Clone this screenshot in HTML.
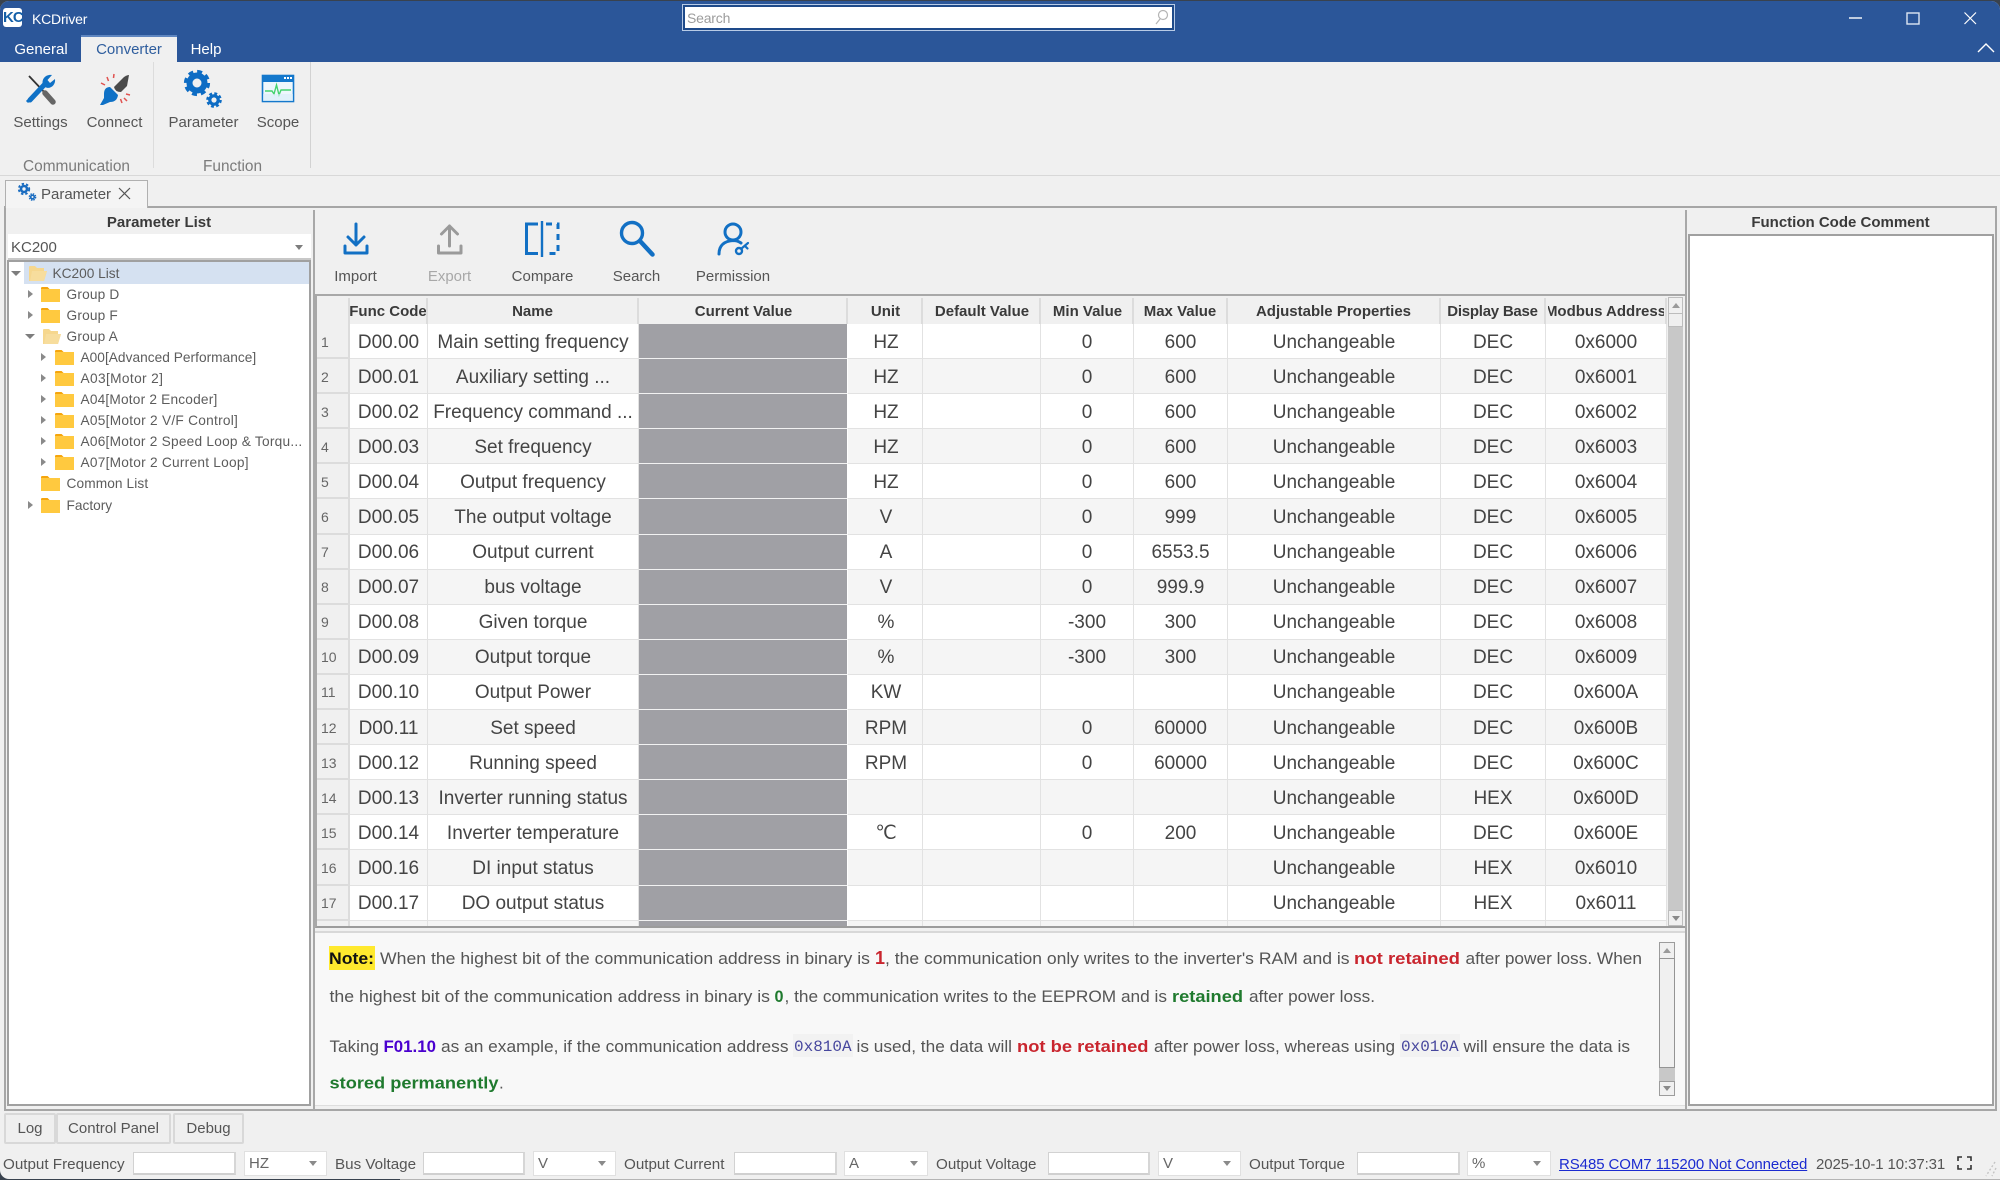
<!DOCTYPE html>
<html lang="en"><head><meta charset="utf-8"><title>KCDriver</title>
<style>
*{box-sizing:border-box}
html,body{margin:0;padding:0;width:2000px;height:1180px;overflow:hidden;background:#39424e}
body{font-family:"Liberation Sans",sans-serif;color:#555;position:relative}
#app{position:absolute;left:0;top:1px;width:2000px;height:1178px;background:#f0f0f0;border-radius:9px 9px 0 9px;overflow:hidden}
.a{position:absolute;white-space:nowrap}
.c{position:absolute;white-space:nowrap;text-align:center;transform:translateX(-50%)}
.v{position:absolute;left:0;top:-1px;pointer-events:none}
#title{position:absolute;left:0;top:-1px;width:2000px;height:62px;background:#2b5699}
.rib{font-size:15px;line-height:20px;color:#555}
.grp{font-size:15.4px;line-height:20px;color:#7b7b7b}
.tb{font-size:15px;line-height:20px;color:#555}
.hd{font-size:15px;font-weight:bold;color:#3a3a3a;line-height:20px}
/* tree */
.tr{position:absolute;font-size:13.7px;line-height:20px;color:#5c5c5c;white-space:nowrap}
.ar{position:absolute;width:0;height:0;border-top:4.5px solid transparent;border-bottom:4.5px solid transparent;border-left:5px solid #8a8a8a}
.dn{position:absolute;width:0;height:0;border-left:5px solid transparent;border-right:5px solid transparent;border-top:5px solid #7d7d7d}
/* grid */
#grid{position:absolute;left:315px;top:293px;width:1370px;height:634px;overflow:hidden;background:#f0f0f0;border-top:2px solid #a8a8a8;border-bottom:2px solid #9c9c9c;border-left:2px solid #a8a8a8}
#gh{position:absolute;left:0;top:2px;height:26px;display:flex}
#gh span{display:flex;align-items:center;justify-content:center;height:26px;font-size:15px;font-weight:bold;color:#3a3a3a;border-right:2px solid #dcdcdc;white-space:nowrap;overflow:hidden;background:#f0f0f0}
#gh span:nth-child(4),#gh span:nth-child(5),#gh span:nth-child(6),#gh span:nth-child(7){padding-left:2px}
#gh span:nth-child(10){letter-spacing:-.25px}
#gh em{display:flex;justify-content:center;width:116px;overflow:hidden;font-style:normal}
#gh em b{flex:none}
.wrap{position:absolute;left:0;top:28px;width:1351px}
.r{display:flex;height:35.1px}
.r span{display:flex;align-items:center;justify-content:center;font-size:19px;color:#444;background:#fff;border-right:1px solid #e2e2e2;border-bottom:1px solid #e2e2e2;white-space:nowrap;overflow:hidden;padding-top:3px}
.r:nth-child(even) span{background:#f5f5f5}
.r span:nth-child(5){padding-left:2px}
.r span:nth-child(1),.r:nth-child(even) span:nth-child(1){background:#f0f0f0;font-size:14px;color:#666;justify-content:flex-start;padding-left:4px;border:0;border-right:2px solid #dcdcdc;border-bottom:2px solid #dcdcdc;padding-top:2px}
.r span:nth-child(4),.r:nth-child(even) span:nth-child(4){background:#a0a0a5;border-bottom:1.5px solid #f2f2f2;border-right:1px solid #fff}
.r span:nth-child(1),#gh span:nth-child(1){width:33px}
.r span:nth-child(2),#gh span:nth-child(2){width:78px}
.r span:nth-child(3),#gh span:nth-child(3){width:211px}
.r span:nth-child(4),#gh span:nth-child(4){width:209px}
.r span:nth-child(5),#gh span:nth-child(5){width:75px}
.r span:nth-child(6),#gh span:nth-child(6){width:118px}
.r span:nth-child(7),#gh span:nth-child(7){width:93px}
.r span:nth-child(8),#gh span:nth-child(8){width:94px}
.r span:nth-child(9),#gh span:nth-child(9){width:213px}
.r span:nth-child(10),#gh span:nth-child(10){width:105px}
.r span:nth-child(11),#gh span:nth-child(11){width:121px}
.arrU{position:absolute;width:0;height:0;border-left:4px solid transparent;border-right:4px solid transparent;border-bottom:5px solid #9a9a9a}
.arrD{position:absolute;width:0;height:0;border-left:4px solid transparent;border-right:4px solid transparent;border-top:5px solid #8a8a8a}
.sbb{position:absolute;background:#f0f0f0;border:1px solid #bdbdbd}
/* status */
.lb{position:absolute;top:1154px;font-size:15.2px;line-height:20px;color:#555;white-space:nowrap}
.inp{position:absolute;top:1151px;height:23px;background:#fff;border:1px solid #d2d2d2;border-bottom:2px solid #d0d0d0;border-right:2px solid #d6d6d6}
.cmb{position:absolute;top:1150px;height:25px;background:#fff;border:1px solid #e0e0e0;font-size:15px;line-height:24px;padding-left:4px;color:#666}
.cmb i{position:absolute;right:9px;top:9px;width:0;height:0;border-left:4px solid transparent;border-right:4px solid transparent;border-top:5px solid #8a8a8a}
.btab{position:absolute;top:1112px;height:31px;background:#efefef;border:2px solid #d8d8d8;border-radius:2px;font-size:15px;line-height:28px;text-align:center;color:#555}
</style></head>
<body>
<svg width="0" height="0" style="position:absolute">
<defs>
<symbol id="fo" viewBox="0 0 19 15"><path d="M0 1.5Q0 0 1.5 0H6.5L8.5 2H19V15H0Z" fill="#ffc93f"/><path d="M0 1.5Q0 0 1.5 0H6.5L8.5 2H0Z" fill="#f5a50e"/></symbol>
<symbol id="fo2" viewBox="0 0 19 15"><path d="M1 1Q1 0 2 0H7L9 2H16V5H19L16 15H1Z" fill="#f6d78e"/><path d="M2 15L4 5H19L16 15Z" fill="#f7dd9d"/></symbol>
</defs>
</svg>
<div id="app">
<div id="title"></div>
<!-- logo -->
<div class="a" style="left:3px;top:7px;width:19px;height:19px;background:#fff;border-radius:3px;color:#1560a8;font-weight:bold;font-size:15px;line-height:19px;text-align:center;letter-spacing:-1px">KC</div>
<div class="a" style="left:32px;top:8px;font-size:14px;line-height:20px;color:#fff;width:54px;letter-spacing:-.2px">KCDriver</div>
<!-- search -->
<div class="a" style="left:683px;top:4px;width:491px;height:25px;background:#fff;border:2px solid #1e4a8a;outline:1px solid #b8cbe6"></div>
<div class="a" style="left:687px;top:8px;font-size:14px;line-height:18px;color:#9c9c9c;letter-spacing:-.2px">Search</div>
<!-- tabs -->
<div class="a" style="left:81px;top:34px;width:96px;height:28px;background:#f0f0f0;border-top:2px solid #5f86c0"></div>
<div class="c" style="left:41px;top:39px;font-size:15px;line-height:20px;color:#fff">General</div>
<div class="c" style="left:129px;top:39px;font-size:15px;line-height:20px;color:#2f5e9e">Converter</div>
<div class="c" style="left:206px;top:39px;font-size:15px;line-height:20px;color:#fff">Help</div>
<!-- ribbon -->
<div class="a" style="left:153px;top:61px;width:1px;height:106px;background:#dcdcdc"></div>
<div class="a" style="left:310px;top:61px;width:1px;height:106px;background:#d2d2d2"></div>
<div class="a" style="left:0;top:174px;width:2000px;height:1px;background:#d8d8d8"></div>
<div class="c rib" style="left:40.5px;top:112px">Settings</div>
<div class="c rib" style="left:114.5px;top:112px">Connect</div>
<div class="c rib" style="left:203.5px;top:112px">Parameter</div>
<div class="c rib" style="left:278px;top:112px">Scope</div>
<div class="c grp" style="left:76.5px;top:156px">Communication</div>
<div class="c grp" style="left:232.5px;top:156px">Function</div>
<!-- doc tab -->
<div class="a" style="left:4px;top:205px;width:1993px;height:905px;border:2px solid #a6a6a6"></div>
<div class="a" style="left:5px;top:179px;width:143px;height:28px;background:#f4f4f4;border:1px solid #b0b0b0;border-bottom:0"></div>
<div class="a" style="left:41px;top:183.5px;font-size:15px;line-height:20px;color:#555">Parameter</div>
<!-- left panel -->
<div class="c hd" style="left:159px;top:212px">Parameter List</div>
<div class="a" style="left:8px;top:233px;width:303px;height:26px;background:#fff;border-bottom:2px solid #c8c8c8;font-size:15px;line-height:27px;padding-left:3px;color:#555">KC200</div>
<div class="dn" style="left:295px;top:244px;border-left-width:4px;border-right-width:4px"></div>
<div class="a" style="left:7px;top:259px;width:304px;height:846px;background:#fff;border:2px solid #a0a0a0"></div>
<div class="a" style="left:24px;top:261px;width:285px;height:22px;background:#d5e1f1"></div>
<div class="dn" style="left:11px;top:270px"></div>
<svg class="a" style="left:28px;top:265px" width="19" height="15"><use href="#fo2"/></svg>
<div class="tr" style="left:52.5px;top:262.5px">KC200 List</div>
<div class="ar" style="left:28px;top:289px"></div><svg class="a" style="left:41px;top:286px" width="19" height="15"><use href="#fo"/></svg><div class="tr" style="left:66.5px;top:283.5px;letter-spacing:.18px">Group D</div>
<div class="ar" style="left:28px;top:310px"></div><svg class="a" style="left:41px;top:307px" width="19" height="15"><use href="#fo"/></svg><div class="tr" style="left:66.5px;top:304.5px;letter-spacing:.18px">Group F</div>
<div class="dn" style="left:25px;top:333px"></div><svg class="a" style="left:42px;top:328px" width="19" height="15"><use href="#fo2"/></svg><div class="tr" style="left:66.5px;top:326px;letter-spacing:.18px">Group A</div>
<div class="ar" style="left:41px;top:352px"></div><svg class="a" style="left:55px;top:349px" width="19" height="15"><use href="#fo"/></svg><div class="tr" style="left:80.5px;top:346.5px;letter-spacing:.03px">A00[Advanced Performance]</div>
<div class="ar" style="left:41px;top:373px"></div><svg class="a" style="left:55px;top:370px" width="19" height="15"><use href="#fo"/></svg><div class="tr" style="left:80.5px;top:368px;letter-spacing:.37px">A03[Motor 2]</div>
<div class="ar" style="left:41px;top:394px"></div><svg class="a" style="left:55px;top:391px" width="19" height="15"><use href="#fo"/></svg><div class="tr" style="left:80.5px;top:389px;letter-spacing:.19px">A04[Motor 2 Encoder]</div>
<div class="ar" style="left:41px;top:415px"></div><svg class="a" style="left:55px;top:412px" width="19" height="15"><use href="#fo"/></svg><div class="tr" style="left:80.5px;top:410px;letter-spacing:.26px">A05[Motor 2 V/F Control]</div>
<div class="ar" style="left:41px;top:436px"></div><svg class="a" style="left:55px;top:433px" width="19" height="15"><use href="#fo"/></svg><div class="tr" style="left:80.5px;top:431px;letter-spacing:.23px">A06[Motor 2 Speed Loop &amp; Torqu...</div>
<div class="ar" style="left:41px;top:457px"></div><svg class="a" style="left:55px;top:454px" width="19" height="15"><use href="#fo"/></svg><div class="tr" style="left:80.5px;top:452px;letter-spacing:.25px">A07[Motor 2 Current Loop]</div>
<svg class="a" style="left:41px;top:475px" width="19" height="15"><use href="#fo"/></svg><div class="tr" style="left:66.5px;top:473px;letter-spacing:.1px">Common List</div>
<div class="ar" style="left:28px;top:500px"></div><svg class="a" style="left:41px;top:497px" width="19" height="15"><use href="#fo"/></svg><div class="tr" style="left:66.5px;top:494.5px">Factory</div>
<!-- divider -->
<div class="a" style="left:313px;top:209px;width:2px;height:900px;background:#a8a8a8"></div>
<div class="a" style="left:1685px;top:209px;width:2px;height:900px;background:#a8a8a8"></div>
<!-- toolbar labels -->
<div class="c tb" style="left:355.5px;top:266px">Import</div>
<div class="c tb" style="left:449.5px;top:266px;color:#a8a8a8">Export</div>
<div class="c tb" style="left:542.5px;top:266px">Compare</div>
<div class="c tb" style="left:636.5px;top:266px">Search</div>
<div class="c tb" style="left:733px;top:266px">Permission</div>
<!-- grid -->
<div id="grid">
<div id="gh"><span></span><span>Func Code</span><span>Name</span><span>Current Value</span><span>Unit</span><span>Default Value</span><span>Min Value</span><span>Max Value</span><span>Adjustable Properties</span><span>Display Base</span><span><em><b>Modbus Address</b></em></span></div>
<div class="wrap">
<div class="r"><span>1</span><span>D00.00</span><span>Main setting frequency</span><span></span><span>HZ</span><span></span><span>0</span><span>600</span><span>Unchangeable</span><span>DEC</span><span>0x6000</span></div>
<div class="r"><span>2</span><span>D00.01</span><span>Auxiliary setting ...</span><span></span><span>HZ</span><span></span><span>0</span><span>600</span><span>Unchangeable</span><span>DEC</span><span>0x6001</span></div>
<div class="r"><span>3</span><span>D00.02</span><span>Frequency command ...</span><span></span><span>HZ</span><span></span><span>0</span><span>600</span><span>Unchangeable</span><span>DEC</span><span>0x6002</span></div>
<div class="r"><span>4</span><span>D00.03</span><span>Set frequency</span><span></span><span>HZ</span><span></span><span>0</span><span>600</span><span>Unchangeable</span><span>DEC</span><span>0x6003</span></div>
<div class="r"><span>5</span><span>D00.04</span><span>Output frequency</span><span></span><span>HZ</span><span></span><span>0</span><span>600</span><span>Unchangeable</span><span>DEC</span><span>0x6004</span></div>
<div class="r"><span>6</span><span>D00.05</span><span>The output voltage</span><span></span><span>V</span><span></span><span>0</span><span>999</span><span>Unchangeable</span><span>DEC</span><span>0x6005</span></div>
<div class="r"><span>7</span><span>D00.06</span><span>Output current</span><span></span><span>A</span><span></span><span>0</span><span>6553.5</span><span>Unchangeable</span><span>DEC</span><span>0x6006</span></div>
<div class="r"><span>8</span><span>D00.07</span><span>bus voltage</span><span></span><span>V</span><span></span><span>0</span><span>999.9</span><span>Unchangeable</span><span>DEC</span><span>0x6007</span></div>
<div class="r"><span>9</span><span>D00.08</span><span>Given torque</span><span></span><span>%</span><span></span><span>-300</span><span>300</span><span>Unchangeable</span><span>DEC</span><span>0x6008</span></div>
<div class="r"><span>10</span><span>D00.09</span><span>Output torque</span><span></span><span>%</span><span></span><span>-300</span><span>300</span><span>Unchangeable</span><span>DEC</span><span>0x6009</span></div>
<div class="r"><span>11</span><span>D00.10</span><span>Output Power</span><span></span><span>KW</span><span></span><span></span><span></span><span>Unchangeable</span><span>DEC</span><span>0x600A</span></div>
<div class="r"><span>12</span><span>D00.11</span><span>Set speed</span><span></span><span>RPM</span><span></span><span>0</span><span>60000</span><span>Unchangeable</span><span>DEC</span><span>0x600B</span></div>
<div class="r"><span>13</span><span>D00.12</span><span>Running speed</span><span></span><span>RPM</span><span></span><span>0</span><span>60000</span><span>Unchangeable</span><span>DEC</span><span>0x600C</span></div>
<div class="r"><span>14</span><span>D00.13</span><span>Inverter running status</span><span></span><span></span><span></span><span></span><span></span><span>Unchangeable</span><span>HEX</span><span>0x600D</span></div>
<div class="r"><span>15</span><span>D00.14</span><span>Inverter temperature</span><span></span><span>℃</span><span></span><span>0</span><span>200</span><span>Unchangeable</span><span>DEC</span><span>0x600E</span></div>
<div class="r"><span>16</span><span>D00.16</span><span>DI input status</span><span></span><span></span><span></span><span></span><span></span><span>Unchangeable</span><span>HEX</span><span>0x6010</span></div>
<div class="r"><span>17</span><span>D00.17</span><span>DO output status</span><span></span><span></span><span></span><span></span><span></span><span>Unchangeable</span><span>HEX</span><span>0x6011</span></div>
<div class="r"><span></span><span></span><span></span><span></span><span></span><span></span><span></span><span></span><span></span><span></span><span></span></div>
</div>
</div>
<!-- grid scrollbar -->
<div class="a" style="left:1668px;top:296px;width:15px;height:629px;background:#c8c8c8"></div>
<div class="sbb" style="left:1668px;top:296px;width:15px;height:17px"></div><div class="arrU" style="left:1671.5px;top:302px"></div>
<div class="a" style="left:1668px;top:312px;width:15px;height:14px;background:#efefef;border:1px solid #bcbcbc"></div>
<div class="sbb" style="left:1668px;top:909px;width:15px;height:16px"></div><div class="arrD" style="left:1671.5px;top:915px"></div>
<!-- notes -->
<div class="a" style="left:315px;top:930px;width:1370px;height:175px;background:#f8f8f8;border-top:2px solid #d8d8d8;border-bottom:1px solid #dedede"></div>
<div class="a" style="left:328.5px;top:945px;width:46.5px;height:24px;background:#ffe92e"></div>
<div class="a" style="left:792.5px;top:1033px;width:60px;height:23px;background:#f2f2f2"></div>
<div class="a" style="left:1399.5px;top:1033px;width:60px;height:23px;background:#f2f2f2"></div>
<!-- notes scrollbar -->
<div class="a" style="left:1659px;top:941px;width:16px;height:154px;background:#c8c8c8"></div>
<div class="sbb" style="left:1659px;top:941px;width:16px;height:17px;border-color:#9c9c9c"></div><div class="arrU" style="left:1663px;top:947px"></div>
<div class="a" style="left:1659px;top:957px;width:16px;height:110px;background:#f0f0f0;border:1px solid #949494"></div>
<div class="sbb" style="left:1659px;top:1080px;width:16px;height:15px;border-color:#9c9c9c"></div><div class="arrD" style="left:1663px;top:1085px"></div>
<!-- right panel -->
<div class="c hd" style="left:1840.5px;top:212px">Function Code Comment</div>
<div class="a" style="left:1688px;top:233px;width:306px;height:872px;background:#fff;border:2px solid #a0a0a0"></div>
<!-- bottom tabs -->
<div class="btab" style="left:4px;width:52px">Log</div>
<div class="btab" style="left:56px;width:115px">Control Panel</div>
<div class="btab" style="left:173px;width:71px">Debug</div>
<!-- status -->
<div class="lb" style="left:3px">Output Frequency</div>
<div class="inp" style="left:133px;width:103px"></div>
<div class="cmb" style="left:244px;width:83px">HZ<i></i></div>
<div class="lb" style="left:335px">Bus Voltage</div>
<div class="inp" style="left:423px;width:102px"></div>
<div class="cmb" style="left:533px;width:83px">V<i></i></div>
<div class="lb" style="left:624px">Output Current</div>
<div class="inp" style="left:734px;width:103px"></div>
<div class="cmb" style="left:844px;width:84px">A<i></i></div>
<div class="lb" style="left:936px">Output Voltage</div>
<div class="inp" style="left:1048px;width:102px"></div>
<div class="cmb" style="left:1158px;width:83px">V<i></i></div>
<div class="lb" style="left:1249px">Output Torque</div>
<div class="inp" style="left:1357px;width:103px"></div>
<div class="cmb" style="left:1467px;width:84px">%<i></i></div>
<div class="lb" style="left:1559px;color:#1b2bd0;text-decoration:underline;font-size:15px;letter-spacing:-.08px">RS485 COM7 115200 Not Connected</div>
<div class="lb" style="left:1816px;font-size:15px;color:#555;letter-spacing:-.1px">2025-10-1 10:37:31</div>
</div>
<div class="a" style="left:400px;top:1179px;width:1600px;height:1px;background:#b4b4b4"></div>

<!-- all vector art & note text, in page coordinates -->
<svg class="v" width="2000" height="1180" style="top:0" font-family="Liberation Sans, sans-serif">
<!-- magnifier search -->
<g fill="none" stroke="#b4b4b4" stroke-width="1.2"><circle cx="1163" cy="15" r="4.5"/><path d="M1160 19L1156 24"/></g>
<!-- window buttons -->
<path d="M1849 18H1862" stroke="#fff" stroke-width="1.4"/>
<rect x="1907" y="13" width="12" height="11" fill="none" stroke="#dfe7f3" stroke-width="1.4"/>
<path d="M1964.5 12.5L1976 24M1976 12.5L1964.5 24" stroke="#fff" stroke-width="1.2"/>
<path d="M1978 52L1986 44L1994 52" fill="none" stroke="#fff" stroke-width="1.4"/>
<!-- settings -->
<g>
<path d="M29 76L46 94" stroke="#333" stroke-width="1.8"/>
<path d="M45 93L53 102" stroke="#666" stroke-width="5.5" stroke-linecap="round"/>
<path d="M30 100L45 84" stroke="#0f71c6" stroke-width="5" stroke-linecap="round"/>
<path d="M43 85C41 79 46 74 52 75L47.5 80L50 83L55 79C56 85 50 90 45 87Z" fill="#0f71c6"/>
<path d="M27 102L31 98" stroke="#0f71c6" stroke-width="3"/>
</g>
<!-- connect -->
<g>
<path d="M114 87L124 77Q127 75 129 75L127 86L121 92Q115 92 114 87Z" fill="#4a4a4a"/>
<path d="M104 94Q104 87 110 87L118 95Q117 102 110 102L103 105L100 105L104 98Z" fill="#0f71c6"/>
<path d="M107 77L108.5 81M101 83L105 85M114 74L113.5 78M130 95L126 94M122 103L120.5 99M127 101L124 98" stroke="#e0524f" stroke-width="1.5" fill="none"/>
</g>
<!-- parameter gears -->
<g fill="none" stroke="#0d6cc4">
<circle cx="197" cy="83" r="7.5" stroke-width="6"/>
<circle cx="197" cy="83" r="11.5" stroke-width="3.2" stroke-dasharray="5 4"/>
<circle cx="214" cy="100" r="4.2" stroke-width="3.2"/>
<circle cx="214" cy="100" r="6.6" stroke-width="2.4" stroke-dasharray="2.9 2.3"/>
</g>
<!-- scope -->
<g>
<rect x="262.5" y="75.5" width="31" height="26" fill="#eef7fc" stroke="#1478cc" stroke-width="1.6"/>
<rect x="262" y="75" width="32" height="7" fill="#1478cc"/>
<path d="M284 77h2v2h-2zM287 77h2v2h-2zM290 77h2v2h-2z" fill="#fff"/>
<path d="M265 91H272L274 94L276.5 85L279 95L281 90H291" fill="none" stroke="#45d36e" stroke-width="1.4"/>
<path d="M263 94H293V101H263Z" fill="#d9edf9" opacity=".6"/>
</g>
<!-- doc tab icon -->
<g fill="none" stroke="#1a6cc0">
<circle cx="24" cy="189" r="3" stroke-width="2.6"/>
<circle cx="24" cy="189" r="5.2" stroke-width="1.9" stroke-dasharray="2.4 2"/>
<circle cx="32.5" cy="197" r="1.8" stroke-width="1.6"/>
<circle cx="32.5" cy="197" r="3.2" stroke-width="1.3" stroke-dasharray="1.5 1"/>
</g>
<path d="M119 188L130 199M130 188L119 199" stroke="#555" stroke-width="1.2"/>
<!-- import -->
<g fill="none" stroke="#1270c4" stroke-width="3" stroke-linecap="round" stroke-linejoin="round">
<path d="M356 224V245M348 237L356 245L364 237"/><path d="M345 246V253H367V246"/>
</g>
<!-- export -->
<g fill="none" stroke="#9a9a9a" stroke-width="3" stroke-linecap="round" stroke-linejoin="round">
<path d="M449.5 246V226M441.5 234L449.5 226L457.5 234"/><path d="M438.5 246V253H461V246"/>
</g>
<!-- compare -->
<g fill="none" stroke="#1270c4">
<path d="M538 224H526.5V253.5H538" stroke-width="3"/>
<path d="M542 221V257" stroke-width="2.4"/>
<path d="M546 224H558V253.5H546" stroke-width="3" stroke-dasharray="6 5"/>
</g>
<!-- search -->
<g fill="none" stroke="#1270c4"><circle cx="632" cy="233" r="10.5" stroke-width="3.4"/><path d="M640 241L652.5 254.5" stroke-width="4.5" stroke-linecap="round"/></g>
<!-- permission -->
<g fill="none" stroke="#1270c4" stroke-linecap="round">
<circle cx="733" cy="232" r="8" stroke-width="3"/>
<path d="M719 254C719 245 725 241 733 240.5C736 240.5 739 241.5 741 243" stroke-width="3"/>
<circle cx="739" cy="251" r="3" stroke-width="2.4"/>
<path d="M741.5 248.5L748 243M745 246L747.5 248.5" stroke-width="2.2"/>
</g>
<!-- fullscreen -->
<path d="M1958 1161V1157H1962M1967 1157H1971V1161M1958 1165V1169H1962M1967 1169H1971V1165" fill="none" stroke="#333" stroke-width="1.6"/>
<path d="M1995 1162L1986 1176M1996 1168L1992 1176" stroke="#c4c4c4" stroke-width="1.4" stroke-dasharray="2 2"/>
<!-- notes text -->
<g font-size="17" fill="#555">
<text x="329" y="964" font-weight="bold" fill="#111" textLength="45" lengthAdjust="spacingAndGlyphs">Note:</text>
<text x="380" y="964" textLength="490" lengthAdjust="spacingAndGlyphs">When the highest bit of the communication address in binary is</text>
<text x="875" y="964" font-weight="bold" fill="#c9252e" font-size="18">1</text>
<text x="885" y="964" textLength="464.5" lengthAdjust="spacingAndGlyphs">, the communication only writes to the inverter's RAM and is</text>
<text x="1354" y="964" font-weight="bold" fill="#c9252e" textLength="106" lengthAdjust="spacingAndGlyphs">not retained</text>
<text x="1465.5" y="964" textLength="176.5" lengthAdjust="spacingAndGlyphs">after power loss. When</text>
<text x="329.5" y="1002" textLength="440.5" lengthAdjust="spacingAndGlyphs">the highest bit of the communication address in binary is</text>
<text x="774.5" y="1002" font-weight="bold" fill="#1f7a2e" textLength="9" lengthAdjust="spacingAndGlyphs">0</text>
<text x="784.5" y="1002" textLength="382.5" lengthAdjust="spacingAndGlyphs">, the communication writes to the EEPROM and is</text>
<text x="1172" y="1002" font-weight="bold" fill="#1f7a2e" textLength="71" lengthAdjust="spacingAndGlyphs">retained</text>
<text x="1249" y="1002" textLength="126" lengthAdjust="spacingAndGlyphs">after power loss.</text>
<text x="329.5" y="1052" textLength="49.5" lengthAdjust="spacingAndGlyphs">Taking</text>
<text x="383.5" y="1052" font-weight="bold" fill="#4a00cf" textLength="52.5" lengthAdjust="spacingAndGlyphs">F01.10</text>
<text x="441" y="1052" textLength="347.5" lengthAdjust="spacingAndGlyphs">as an example, if the communication address</text>
<text x="794" y="1051" font-family="Liberation Mono, monospace" font-size="16" fill="#47479e">0x810A</text>
<text x="856.5" y="1052" textLength="155.5" lengthAdjust="spacingAndGlyphs">is used, the data will</text>
<text x="1017" y="1052" font-weight="bold" fill="#c9252e" textLength="131.5" lengthAdjust="spacingAndGlyphs">not be retained</text>
<text x="1154" y="1052" textLength="241" lengthAdjust="spacingAndGlyphs">after power loss, whereas using</text>
<text x="1401" y="1051" font-family="Liberation Mono, monospace" font-size="16" fill="#47479e">0x010A</text>
<text x="1463.5" y="1052" textLength="166.5" lengthAdjust="spacingAndGlyphs">will ensure the data is</text>
<text x="329.5" y="1088.5" font-weight="bold" fill="#1f7a2e" textLength="169" lengthAdjust="spacingAndGlyphs">stored permanently</text>
<text x="499" y="1088.5">.</text>
</g>
</svg>
</body></html>
